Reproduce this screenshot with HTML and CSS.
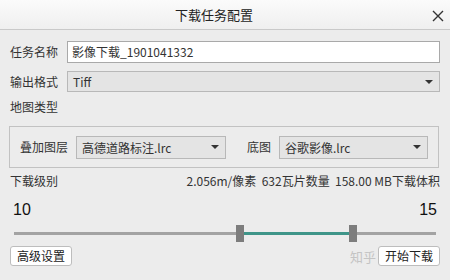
FILE: index.html
```html
<!DOCTYPE html>
<html lang="zh-CN">
<head>
    <meta charset="UTF-8">
    <title>下载任务配置</title>
    <link rel="stylesheet" href="styles.css">
</head>
<body>

<div class="dialog">
    <div class="titlebar">
        <span class="title">下载任务配置</span>
        <span class="close">
            <svg width="12" height="12" viewBox="0 0 12 12"><path d="M1 1L11 11M11 1L1 11" stroke="#333" stroke-width="1.4"/></svg>
        </span>
    </div>

    <div class="content">
        <div class="row">
            <span class="label">任务名称</span>
            <div class="textbox">影像下载_1901041332</div>
        </div>
        <div class="row row-format">
            <span class="label">输出格式</span>
            <div class="combo combo-wide">Tiff<span class="arrow"></span></div>
        </div>

        <div class="section-title">地图类型</div>

        <div class="groupbox">
            <span class="label">叠加图层</span>
            <div class="combo combo-layer">高德道路标注.lrc<span class="arrow"></span></div>
            <span class="label label-base">底图</span>
            <div class="combo combo-base">谷歌影像.lrc<span class="arrow"></span></div>
        </div>

        <div class="info-row">
            <span>下载级别</span>
            <span>2.056m/像素 &nbsp;632瓦片数量 &nbsp;158.00 MB下载体积</span>
        </div>

        <div class="levels">
            <span>10</span>
            <span>15</span>
        </div>

        <div class="slider">
            <div class="track"></div>
            <div class="range"></div>
            <div class="handle handle-min"></div>
            <div class="handle handle-max"></div>
        </div>

        <div class="buttons">
            <button class="btn">高级设置</button>
            <span class="watermark">知乎</span>
            <button class="btn">开始下载</button>
        </div>
    </div>
</div>

</body>
</html>
```

FILE: styles.css
```css
body {
    margin: 0;
    font-family: "Noto Sans CJK SC", "Noto Sans", sans-serif;
    font-size: 12px;
    color: #222;
    background: #ececec;
}

.dialog {
    width: 450px;
    height: 280px;
    background: #ececec;
}

/* window title */
.titlebar {
    height: 29px;
    display: flex;
    align-items: center;
    justify-content: center;
    position: relative;
    background: linear-gradient(#fbfbfb, #efefef);
    border-bottom: 1px solid #c9c9c9;
}

.title {
    font-size: 13px;
    color: #222;
    margin-right: 22px;
}

.close {
    position: absolute;
    right: 6px;
    top: 8px;
    width: 12px;
    height: 12px;
}

.content {
    padding: 11px 10px 0 10px;
}

.row {
    display: flex;
    align-items: center;
    gap: 9px;
    height: 22px;
}

.row-format {
    margin-top: 8px;
    height: 21px;
}

.label {
    color: #333;
    white-space: nowrap;
    line-height: 16px;
}

.textbox {
    flex: 1;
    height: 20px;
    line-height: 20px;
    background: #fff;
    border: 1px solid #a9a9a9;
    padding: 0 4px;
    color: #333;
}

.combo {
    position: relative;
    height: 20px;
    line-height: 20px;
    background: #e4e4e4;
    border: 1px solid #b8b8b8;
    padding: 0 5px;
    color: #333;
    box-sizing: content-box;
}

.combo-wide {
    flex: 1;
    height: 19px;
    line-height: 19px;
}

/* dropdown arrow */
.arrow {
    position: absolute;
    right: 6px;
    top: 8px;
    width: 0;
    height: 0;
    border-left: 4px solid transparent;
    border-right: 4px solid transparent;
    border-top: 4px solid #333;
}

.section-title {
    margin-top: 7px;
    line-height: 16px;
    color: #333;
}

.groupbox {
    margin: 11px 1px 0 -1px;
    height: 40px;
    border: 1px solid #c2c2c2;
    display: flex;
    align-items: center;
    padding: 0 0 0 10px;
    gap: 8px;
}

.combo-layer {
    width: 138px;
    height: 21px;
    line-height: 21px;
}

.label-base {
    margin-left: 13px;
}

.combo-base {
    width: 137px;
    height: 21px;
    line-height: 21px;
}

.info-row {
    margin-top: 5px;
    display: flex;
    justify-content: space-between;
    line-height: 16px;
    color: #333;
}

.levels {
    margin-top: 12px;
    display: flex;
    justify-content: space-between;
    padding: 0 3px;
    font-family: "Liberation Sans", Arial, sans-serif;
    font-size: 16px;
    line-height: 18px;
    color: #111;
}

/* range slider */
.slider {
    position: relative;
    height: 17px;
    margin: 6px 4px 0 4px;
}

.track {
    position: absolute;
    left: 0;
    right: 0;
    top: 7px;
    height: 3px;
    background: #a3a3a3;
}

.range {
    position: absolute;
    left: 230px;
    width: 105px;
    top: 7px;
    height: 3px;
    background: #3f9589;
}

.handle {
    position: absolute;
    top: 0;
    width: 8px;
    height: 17px;
    background: #7d7d7d;
}

.handle-min {
    left: 222px;
}

.handle-max {
    left: 335px;
}

.buttons {
    margin-top: 4px;
    display: flex;
    justify-content: space-between;
    align-items: center;
    position: relative;
}

.btn {
    font-family: "Noto Sans CJK SC", "Noto Sans", sans-serif;
    font-size: 12px;
    color: #222;
    background: #fff;
    border: 1px solid #bdbdbd;
    border-radius: 3px;
    height: 20px;
    width: 62px;
    padding: 0;
    line-height: 18px;
}

.watermark {
    position: absolute;
    right: 64px;
    top: 1px;
    color: #c4c4c4;
    font-size: 13px;
}
```
